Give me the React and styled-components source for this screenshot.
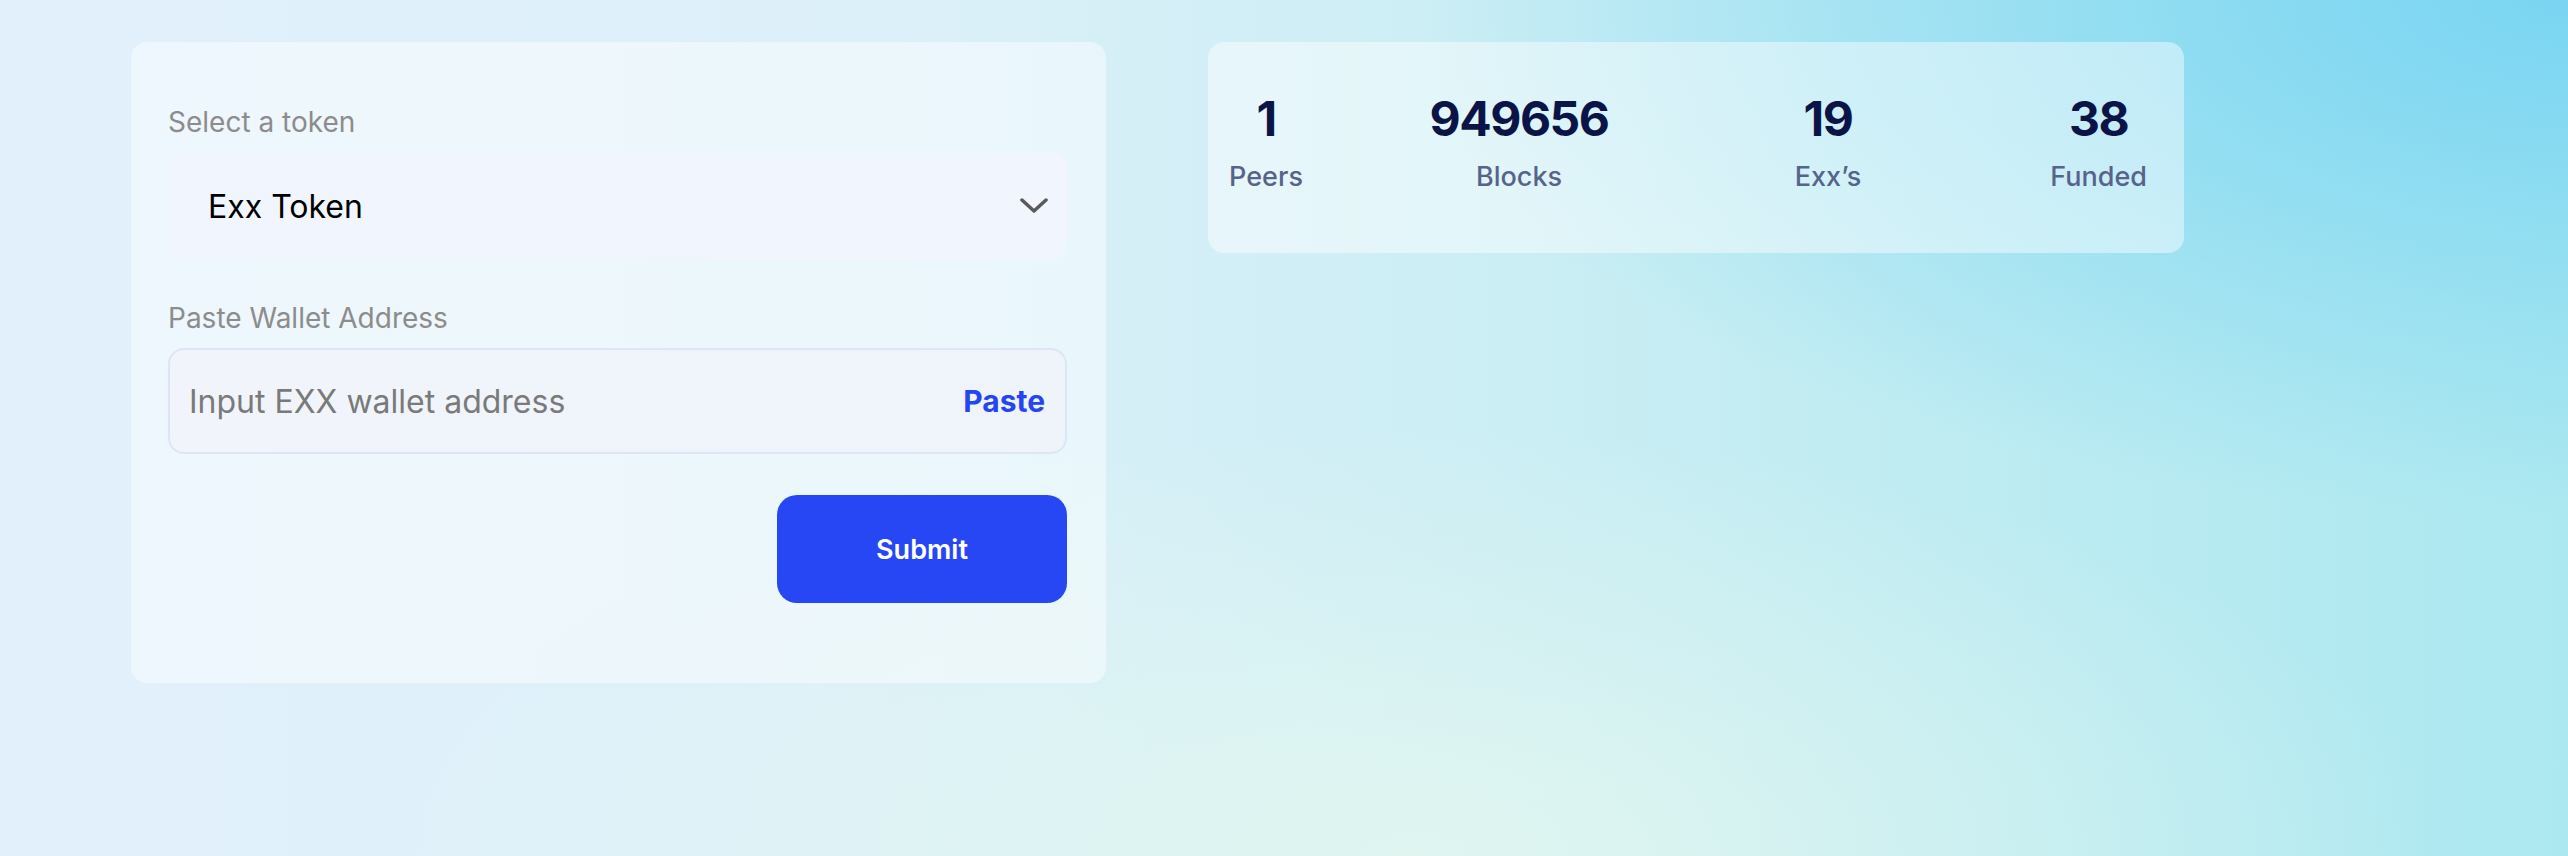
import React, { useState } from 'react';
import styled, { createGlobalStyle } from 'styled-components';

const GlobalStyle = createGlobalStyle`
  html, body {
    margin: 0;
    padding: 0;
  }
  body {
    font-family: Inter, "Noto Sans", "Liberation Sans", sans-serif;
  }
  * {
    box-sizing: border-box;
  }
`;

const Page = styled.div`
  min-height: 100vh;
  display: flex;
  align-items: flex-start;
  gap: 102px;
  padding: 42px 0 0 131px;
  background:
    radial-gradient(ellipse 45% 60% at 100% 0%, rgba(122, 213, 242, 1) 0%, rgba(122, 213, 242, 0) 100%),
    radial-gradient(ellipse 40% 50% at 55% 100%, rgba(226, 246, 240, 0.9) 0%, rgba(226, 246, 240, 0) 100%),
    linear-gradient(90deg, #e2f0fb 0%, #dcf0f9 35%, #c6edf3 65%, #ace8f0 100%);
`;

const Card = styled.div`
  width: ${(p) => p.$width}px;
  background: rgba(255, 255, 255, 0.45);
  border-radius: 16px;
`;

const FormCard = styled(Card)`
  display: flex;
  flex-direction: column;
  padding: 64px 39px 80px 37px;
`;

const FieldLabel = styled.div`
  font-size: 28px;
  line-height: 32px;
  color: #8c8c8c;
  margin-bottom: ${(p) => p.$gap}px;
`;

const SelectBox = styled.div`
  height: 108px;
  display: flex;
  align-items: center;
  justify-content: space-between;
  padding: 0 19px 0 40px;
  background: #f1f6fe;
  border-radius: 16px;
  font-size: 32px;
  color: #000;
  margin-bottom: 42px;
`;

const InputBox = styled.div`
  height: 106px;
  display: flex;
  align-items: center;
  padding: 0 20px 0 17px;
  background: linear-gradient(90deg, #f1f5fb 0%, #eef4f9 100%);
  border: 2px solid #dfe4f6;
  border-radius: 16px;
  margin-bottom: 41px;
`;

const AddressInput = styled.input`
  flex: 1;
  border: none;
  outline: none;
  background: transparent;
  font-family: inherit;
  font-size: 32px;
  color: #333;
  &::placeholder {
    color: #7a7a7a;
  }
`;

const PasteButton = styled.button`
  border: none;
  background: none;
  padding: 0;
  font-family: inherit;
  font-size: 30px;
  font-weight: 700;
  color: #2545f0;
  cursor: pointer;
`;

const SubmitRow = styled.div`
  display: flex;
  justify-content: flex-end;
`;

const SubmitButton = styled.button`
  width: 290px;
  height: 108px;
  border: none;
  border-radius: 20px;
  background: #2747f5;
  color: #fff;
  font-family: inherit;
  font-size: 27px;
  font-weight: 600;
  cursor: pointer;
`;

const StatsCard = styled(Card)`
  display: grid;
  grid-template-columns: 116px 390px 228px 1fr;
  padding: 48px 37px 61px 0;
`;

const Stat = styled.div`
  display: flex;
  flex-direction: column;
  align-items: center;
  justify-self: ${(p) => (p.$end ? 'end' : 'center')};
`;

const StatValue = styled.div`
  font-size: 48px;
  line-height: 58px;
  font-weight: 700;
  color: #0b1447;
  letter-spacing: -1.5px;
`;

const StatLabel = styled.div`
  margin-top: 13px;
  font-size: 27px;
  line-height: 31px;
  font-weight: 500;
  color: #56648a;
`;

const Chevron = () => (
  <svg width="28" height="16" viewBox="0 0 28 16" fill="none">
    <path d="M2 2 L14 13 L26 2" stroke="#5a5a5a" strokeWidth="3.5" strokeLinecap="round" strokeLinejoin="round" />
  </svg>
);

const stats = [
  { value: '1', label: 'Peers' },
  { value: '949656', label: 'Blocks' },
  { value: '19', label: 'Exx’s' },
  { value: '38', label: 'Funded', end: true },
];

const App = () => {
  const [address, setAddress] = useState('');

  return (
    <Page>
      <GlobalStyle />
      <FormCard $width={975}>
        <FieldLabel $gap={14}>Select a token</FieldLabel>
        <SelectBox>
          <span>Exx Token</span>
          <Chevron />
        </SelectBox>
        <FieldLabel $gap={14}>Paste Wallet Address</FieldLabel>
        <InputBox>
          <AddressInput
            value={address}
            onChange={(e) => setAddress(e.target.value)}
            placeholder="Input EXX wallet address"
          />
          <PasteButton>Paste</PasteButton>
        </InputBox>
        <SubmitRow>
          <SubmitButton>Submit</SubmitButton>
        </SubmitRow>
      </FormCard>
      <StatsCard $width={976}>
        {stats.map((s) => (
          <Stat key={s.label} $end={s.end}>
            <StatValue>{s.value}</StatValue>
            <StatLabel>{s.label}</StatLabel>
          </Stat>
        ))}
      </StatsCard>
    </Page>
  );
};

export default App;
